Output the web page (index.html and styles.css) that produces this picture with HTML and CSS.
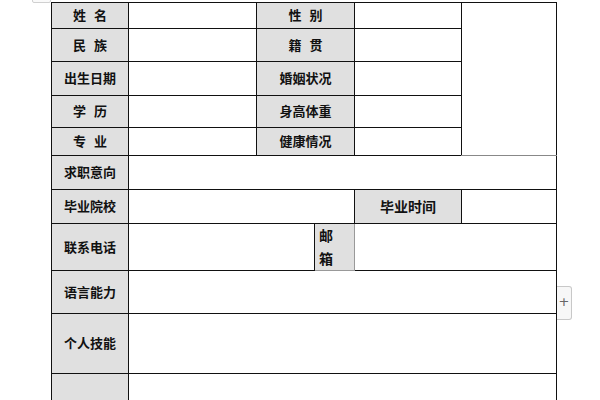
FILE: index.html
```html
<!DOCTYPE html>
<html lang="zh">
<head>
<meta charset="utf-8">
<link rel="stylesheet" href="styles.css">
</head>
<body>
<div class="page">
  <div class="handle"></div>
  <table class="resume">
    <colgroup>
      <col class="c1"><col class="c2"><col class="c3"><col class="c4"><col class="c5"><col class="c6">
    </colgroup>
    <tr class="r1">
      <th>姓 名</th><td></td><th colspan="2">性 别</th><td></td><td class="photo" rowspan="5"></td>
    </tr>
    <tr class="r2">
      <th>民 族</th><td></td><th colspan="2">籍 贯</th><td></td>
    </tr>
    <tr class="r3">
      <th>出生日期</th><td></td><th colspan="2">婚姻状况</th><td></td>
    </tr>
    <tr class="r4">
      <th>学 历</th><td></td><th colspan="2">身高体重</th><td></td>
    </tr>
    <tr class="r5">
      <th>专 业</th><td></td><th colspan="2">健康情况</th><td></td>
    </tr>
    <tr class="r6">
      <th>求职意向</th><td colspan="5"></td>
    </tr>
    <tr class="r7">
      <th>毕业院校</th><td colspan="3"></td><th class="big">毕业时间</th><td></td>
    </tr>
    <tr class="r8">
      <th>联系电话</th><td colspan="2"></td><th class="mail">邮箱</th><td colspan="2"></td>
    </tr>
    <tr class="r9">
      <th>语言能力</th><td colspan="5"></td>
    </tr>
    <tr class="r10">
      <th>个人技能</th><td colspan="5"></td>
    </tr>
    <tr class="r11">
      <th></th><td colspan="5"></td>
    </tr>
  </table>
  <div class="add">+</div>
</div>
</body>
</html>
```

FILE: styles.css
```css
html, body {
  margin: 0;
  padding: 0;
  background: #fff;
}
.page {
  position: relative;
  width: 600px;
  height: 400px;
  overflow: hidden;
  padding: 2px 0 0 51px;
  box-sizing: border-box;
}
.handle {
  position: absolute;
  left: 32px;
  top: -3px;
  width: 17px;
  height: 4px;
  border: 1px solid #d0d0d0;
  border-radius: 2px;
  background: #fafafa;
}
.resume {
  border-collapse: collapse;
  table-layout: fixed;
  width: 505px;
  font-family: "Noto Sans CJK SC", "Noto Sans", sans-serif;
}
.c1 { width: 77px; }
.c2 { width: 128px; }
.c3 { width: 58px; }
.c4 { width: 40px; }
.c5 { width: 107px; }
.c6 { width: 95px; }
.resume th, .resume td {
  border: 1px solid #111;
  padding: 0;
}
.resume th {
  background: #e0e0e0;
  font-size: 13px;
  font-weight: bold;
  color: #111;
  text-align: center;
  vertical-align: middle;
  line-height: 16px;
  white-space: nowrap;
  word-spacing: 5px;
  padding-bottom: 1px;
}
.resume th.big {
  font-size: 14px;
}
.resume th.mail {
  font-size: 14px;
  text-align: left;
  padding: 0 12px 0 4px;
  white-space: normal;
  word-break: break-all;
  line-height: 23px;
  border-color: #999;
}
.resume td.photo {
  border-bottom-color: #888;
}
.r1 { height: 26px; }
.r2 { height: 33px; }
.r3 { height: 34px; }
.r4 { height: 32px; }
.r5 { height: 28px; }
.r6 { height: 34px; }
.r7 { height: 34px; }
.r8 { height: 47px; }
.r9 { height: 43px; }
.r10 { height: 60px; }
.r11 { height: 40px; }
.add {
  position: absolute;
  left: 557px;
  top: 286px;
  width: 14px;
  height: 32px;
  border: 1px solid #c8c8c8;
  border-left: none;
  border-radius: 0 3px 3px 0;
  background: #f7f7f7;
  color: #666;
  font-family: "DejaVu Sans", sans-serif;
  font-size: 13px;
  line-height: 30px;
  text-align: center;
}
```
